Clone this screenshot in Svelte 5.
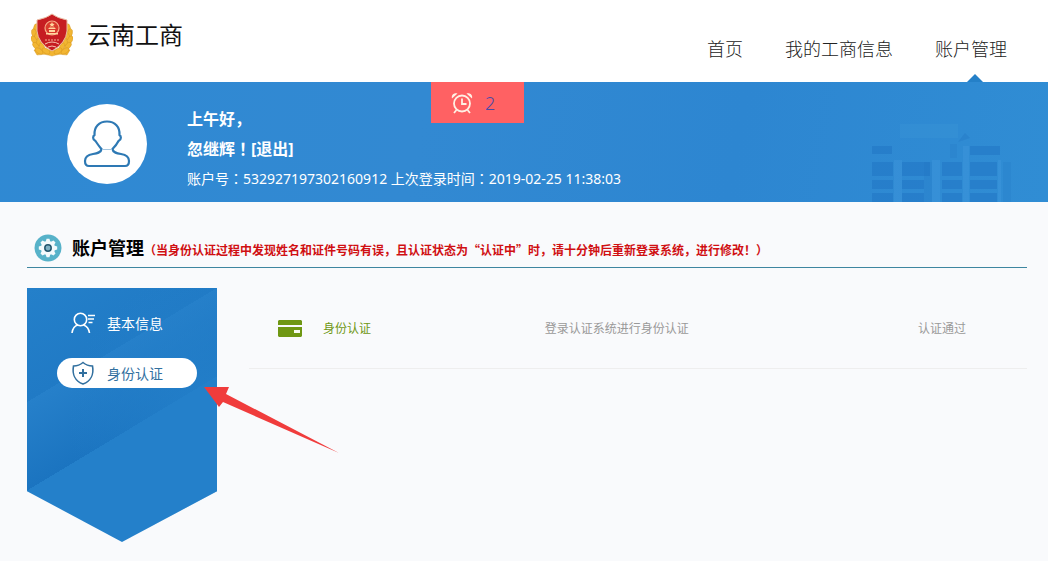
<script lang="ts">
    interface Link {
        label: string;
        active: boolean;
    }

    const navLinks: Link[] = [
        { label: "首页", active: false },
        { label: "我的工商信息", active: false },
        { label: "账户管理", active: true },
    ];

    const records = [
        {
            name: "身份认证",
            description: "登录认证系统进行身份认证",
            status: "认证通过",
        },
    ];

    // x, y, width, height of the storeys in the banner skyline
    const storeys = [
        [12, 26, 20, 8],
        [12, 42, 21, 14],
        [12, 60, 21, 9],
        [12, 73, 21, 9],
        [42, 42, 28, 14],
        [42, 60, 22, 9],
        [42, 73, 22, 9],
        [82, 42, 20, 14],
        [82, 60, 20, 9],
        [82, 73, 20, 9],
        [110, 26, 30, 9],
        [110, 42, 27, 14],
        [110, 60, 27, 9],
        [110, 73, 27, 9],
    ];

    // left half of the wreath, mirrored for the right: x, y, rotation
    const leaves = [
        [5, 15, 10],
        [3, 20, -10],
        [6, 23, 20],
        [3, 27, -25],
        [8, 29, 10],
        [5, 33, -40],
        [11, 34, -20],
        [8, 38, -60],
        [15, 38, -60],
    ];

    const teeth = [0, 45, 90, 135, 180, 225, 270, 315];
</script>

<div class="page" lang="zh-CN">
    <header class="header">
        <div class="brand">
            <svg class="emblem" viewBox="0 0 42 44" aria-hidden="true">
                <g fill="#f2b632" stroke="#d08f1c" stroke-width="0.4">
                    <path d="M3 37Q12 34 21 38Q30 34 39 37L36 42Q28 40 21 43Q14 40 6 42Z" />
                    {#each leaves as [x, y, angle]}
                        <ellipse cx={x} cy={y} rx="2.4" ry="4.4" transform="rotate({angle} {x} {y})" />
                        <ellipse cx={42 - x} cy={y} rx="2.4" ry="4.4" transform="rotate({-angle} {42 - x} {y})" />
                    {/each}
                </g>
                <path
                    d="M21 1Q16 5 6 7L6 18Q7 30 21 38Q35 30 36 18L36 7Q26 5 21 1Z"
                    fill="#c61d22"
                    stroke="#e9b9a0"
                    stroke-width="1"
                />
                <circle cx="21" cy="15" r="7" fill="#d93a2c" stroke="#f5ab86" stroke-width="1.2" />
                <path
                    d="M21 9l.8 1.700 1.800.2-1.300 1.300.3 1.800-1.600-.9-1.600.9.3-1.800-1.300-1.300 1.800-.2zM17 16h8l-1.500-1.500h-5zM18 17h6v2h-6zM15 20h12v1.500H15z"
                    fill="#ffd7a0"
                />
                <path d="M14 27h14" stroke="#f6b08e" stroke-dasharray="2 1" />
                <path d="M14 31q7-4 14 0M17 34q4-2 8 0" fill="none" stroke="#f6c6b0" />
            </svg>
            <span class="brand-name">云南工商</span>
        </div>
        <nav class="nav">
            {#each navLinks as link}
                <a href="#top" class:active={link.active}>{link.label}</a>
            {/each}
        </nav>
    </header>

    <section class="banner">
        <svg class="skyline" viewBox="0 0 160 82" aria-hidden="true">
            <path d="M40 4H98V18H40Z" fill="#45a0de" opacity="0.2" />
            <path d="M34 40V82H42V40ZM72 40V82H80V40ZM103 26V82H109V26ZM138 40V82H141V40Z" fill="#4aa0e2" opacity="0.25" />
            {#each storeys as [x, y, width, height]}
                <rect {x} {y} {width} {height} fill="#1b6cbc" opacity="0.38" />
            {/each}
            <path d="M64 42h8v40h-8zM90 24h7v14h-7zM143 42h8v40h-8z" fill="#1b6cbc" opacity="0.15" />
            <path d="M98 22l7-9 5 5z" fill="#1b6cbc" opacity="0.25" />
        </svg>
        <div class="avatar">
            <svg viewBox="0 0 48 48" fill="none" stroke="#2e79b4" stroke-width="2.2" aria-hidden="true">
                <path
                    d="M18.500 29 C17 27.500 13.500 22.500 12.500 21 C9 19 10 16 11.500 15 C11 7 16 1.500 24 1.500 S37 7 36.500 15 C38 16 39 19 35.500 21 C34.500 23 31 27.500 29.500 29 C30 33 34 33.500 38 34 C44 35 46 37 46 41 C46 44 45 46 42 46 H6 C3 46 2 44 2 41 C2 37 4 35 10 34 C14 33.500 18 33 18.500 29Z"
                />
                <path d="M19 29.500h10" stroke="#a5c6df" stroke-width="1" />
            </svg>
        </div>
        <div class="greeting">
            <p class="hello">上午好，</p>
            <p class="hello">忽继辉<span class="mark" lang="ja">！</span><a href="#logout">[退出]</a></p>
            <p class="account">账户号<span class="mark" lang="ja">：</span>532927197302160912 上次登录时间<span class="mark" lang="ja">：</span>2019-02-25 11:38:03</p>
        </div>
        <a class="alert" href="#messages">
            <svg viewBox="0 0 22 22" fill="none" stroke="#fff0e4" stroke-width="1.8" aria-hidden="true">
                <circle cx="11" cy="11.500" r="8" />
                <path d="M11 6.500v5.500h4.500M5.500 18l-2.500 3M16.500 18l2.500 3" />
                <path d="M1 6.500C0 3 3 .5 6.500 1.500zM21 6.500C22 3 19 .5 15.500 1.500z" fill="#fff0e4" stroke="none" />
            </svg>
            <span>2</span>
        </a>
    </section>

    <main class="main">
        <div class="heading">
            <svg viewBox="0 0 28 28" aria-hidden="true">
                <circle cx="14" cy="14" r="13.500" fill="#57b2c9" />
                <g fill="#f4fafc">
                    <circle cx="14" cy="14" r="7" />
                    {#each teeth as angle}
                        <path d="M12.600 4.800h2.800l1 3.200h-4.800z" transform="rotate({angle} 14 14)" />
                    {/each}
                </g>
                <circle cx="14" cy="14" r="3.200" fill="#7fb0c2" stroke="#23566d" stroke-width="1.500" />
            </svg>
            <h1>账户管理</h1>
            <span class="notice">（当身份认证过程中发现姓名和证件号码有误，且认证状态为“认证中”时，请十分钟后重新登录系统，进行修改！）</span>
        </div>

        <div class="columns">
            <aside class="sidebar">
                <a class="side-link" href="#basic">
                    <svg viewBox="0 0 24 24" fill="none" stroke="currentColor" stroke-width="1.6" aria-hidden="true">
                        <circle cx="9.500" cy="8.500" r="6.200" />
                        <path d="M1 22q1-7 6-8M12.500 14q5 1.500 6 8M17 4.500h7M17 8h6M17.500 11.500h4" />
                    </svg>
                    基本信息
                </a>
                <a class="side-link current" href="#identity">
                    <svg viewBox="0 0 24 24" fill="none" stroke="currentColor" stroke-width="1.6" aria-hidden="true">
                        <path d="M12 1.500Q8 5 2.500 5C1 13 4 20 12 23C20 20 23 13 21.500 5Q16 5 12 1.500Z" />
                        <path d="M12 8v8M8 12h8" stroke-width="2" />
                    </svg>
                    身份认证
                </a>
            </aside>

            <table class="records">
                <tbody>
                    {#each records as record}
                        <tr>
                            <td class="name">
                                <div class="name-inner">
                                    <svg viewBox="0 0 24 17" aria-hidden="true">
                                        <path d="M1 0h22l1 1v4H0V1zM0 7h24v9l-1 1H1l-1-1z" fill="#6f9713" />
                                        <rect x="16" y="10" width="6" height="3" fill="#f7fbef" />
                                    </svg>
                                    {record.name}
                                </div>
                            </td>
                            <td class="description">{record.description}</td>
                            <td class="status">{record.status}</td>
                        </tr>
                    {/each}
                </tbody>
            </table>

            <svg class="pointer" viewBox="0 0 136 68" aria-hidden="true">
                <path d="M0 1L25 1L22 8L135 67L19 16L15 21Z" fill="#f03c3c" />
            </svg>
        </div>
    </main>
</div>

<style>
    :global(body) {
        margin: 0;
        background-color: #f9fafc;
    }

    .page {
        font-family: "Noto Sans", "Noto Sans CJK SC", sans-serif;
        font-size: 14px;
        color: #333;
    }

    a {
        color: inherit;
        text-decoration: none;
    }

    svg {
        display: block;
        flex-shrink: 0;
    }

    .header {
        display: flex;
        justify-content: space-between;
        height: 82px;
        padding: 0 41px 0 31px;
        background-color: #fff;
    }

    .brand {
        display: flex;
        align-items: center;
        gap: 14px;
        height: 70px;
    }

    .emblem {
        width: 42px;
        height: 44px;
    }

    .brand-name {
        font-size: 24px;
        line-height: 32px;
        color: #111;
    }

    .nav {
        display: flex;
        gap: 42px;
    }

    .nav a {
        position: relative;
        padding-top: 34px;
        font-size: 18px;
        line-height: 28px;
        font-weight: 300;
        font-family: "Noto Sans CJK SC", sans-serif;
        color: #222;
    }

    .nav a.active::after {
        content: "";
        position: absolute;
        right: 24px;
        bottom: 0;
        border: 8px solid transparent;
        border-top-width: 0;
        border-bottom-color: #2480c8;
    }

    .banner {
        position: relative;
        display: flex;
        gap: 40px;
        height: 120px;
        padding-left: 67px;
        background: linear-gradient(100deg, #2f89d3, #3289d2 40%, #2d86d1 70%, #308dd4);
        color: #fff;
    }

    .skyline {
        position: absolute;
        right: 28px;
        bottom: 0;
        width: 160px;
        height: 82px;
    }

    .avatar {
        display: flex;
        align-items: center;
        justify-content: center;
        width: 80px;
        height: 80px;
        margin-top: 22px;
        border-radius: 50%;
        background-color: #fff;
    }

    .avatar svg {
        width: 48px;
        height: 48px;
    }

    .greeting {
        padding-top: 22px;
    }

    .greeting p {
        margin: 0;
        line-height: 30px;
    }

    .hello {
        font-size: 16px;
        font-weight: 700;
    }

    .mark {
        font-family: "Noto Sans CJK JP", sans-serif;
        line-height: 1;
    }

    .alert {
        position: absolute;
        top: 0;
        left: 431px;
        display: flex;
        align-items: center;
        gap: 12px;
        box-sizing: border-box;
        width: 93px;
        height: 41px;
        padding-left: 20px;
        background-color: #ff6163;
        font-size: 18px;
        font-weight: 300;
        color: #4a49a6;
    }

    .alert svg {
        width: 22px;
        height: 22px;
    }

    .main {
        padding: 26px 21px 20px 27px;
    }

    .heading {
        display: flex;
        align-items: center;
        height: 39px;
        padding-left: 7px;
        border-bottom: 1px solid #3e86a0;
    }

    .heading svg {
        width: 28px;
        height: 28px;
    }

    h1 {
        margin: 0 0 0 10px;
        font-size: 18px;
        line-height: 24px;
        color: #000;
    }

    .notice {
        padding-top: 4px;
        font-family: "Noto Sans CJK SC", sans-serif;
        font-size: 12px;
        font-weight: 700;
        color: #d00f12;
    }

    .columns {
        position: relative;
        display: flex;
        align-items: flex-start;
        gap: 32px;
        margin-top: 20px;
    }

    .sidebar {
        display: flex;
        flex-direction: column;
        flex-shrink: 0;
        gap: 20px;
        box-sizing: border-box;
        width: 190px;
        height: 254px;
        padding: 20px 20px 0 30px;
        background:
            radial-gradient(circle at 100% 50%, #2480ca, rgba(36, 128, 202, 0) 150px),
            linear-gradient(149deg, #2480ca, #207ac5 31%, #2680ca 31%, #1b74c0 55%, #2480ca 55%);
        clip-path: polygon(0 0, 100% 0, 100% 80%, 50% 100%, 0 80%);
    }

    .side-link {
        display: flex;
        align-items: center;
        gap: 12px;
        height: 30px;
        padding-left: 14px;
        border-radius: 15px;
        color: #fff;
    }

    .side-link.current {
        background-color: #fff;
        color: #32709f;
    }

    .side-link svg {
        width: 24px;
        height: 24px;
    }

    .records {
        flex: 1;
        border-collapse: collapse;
        border-bottom: 1px solid #eee;
        table-layout: fixed;
        font-size: 12px;
        color: #999;
    }

    .records td {
        height: 80px;
        padding: 0;
    }

    .records .name {
        width: 38%;
        color: #6f9713;
    }

    .name-inner {
        display: flex;
        align-items: center;
        gap: 21px;
        padding-left: 29px;
    }

    .name-inner svg {
        width: 24px;
        height: 17px;
    }

    .records .status {
        width: 14%;
    }

    .pointer {
        position: absolute;
        top: 98px;
        left: 177px;
        width: 136px;
        height: 68px;
    }
</style>
